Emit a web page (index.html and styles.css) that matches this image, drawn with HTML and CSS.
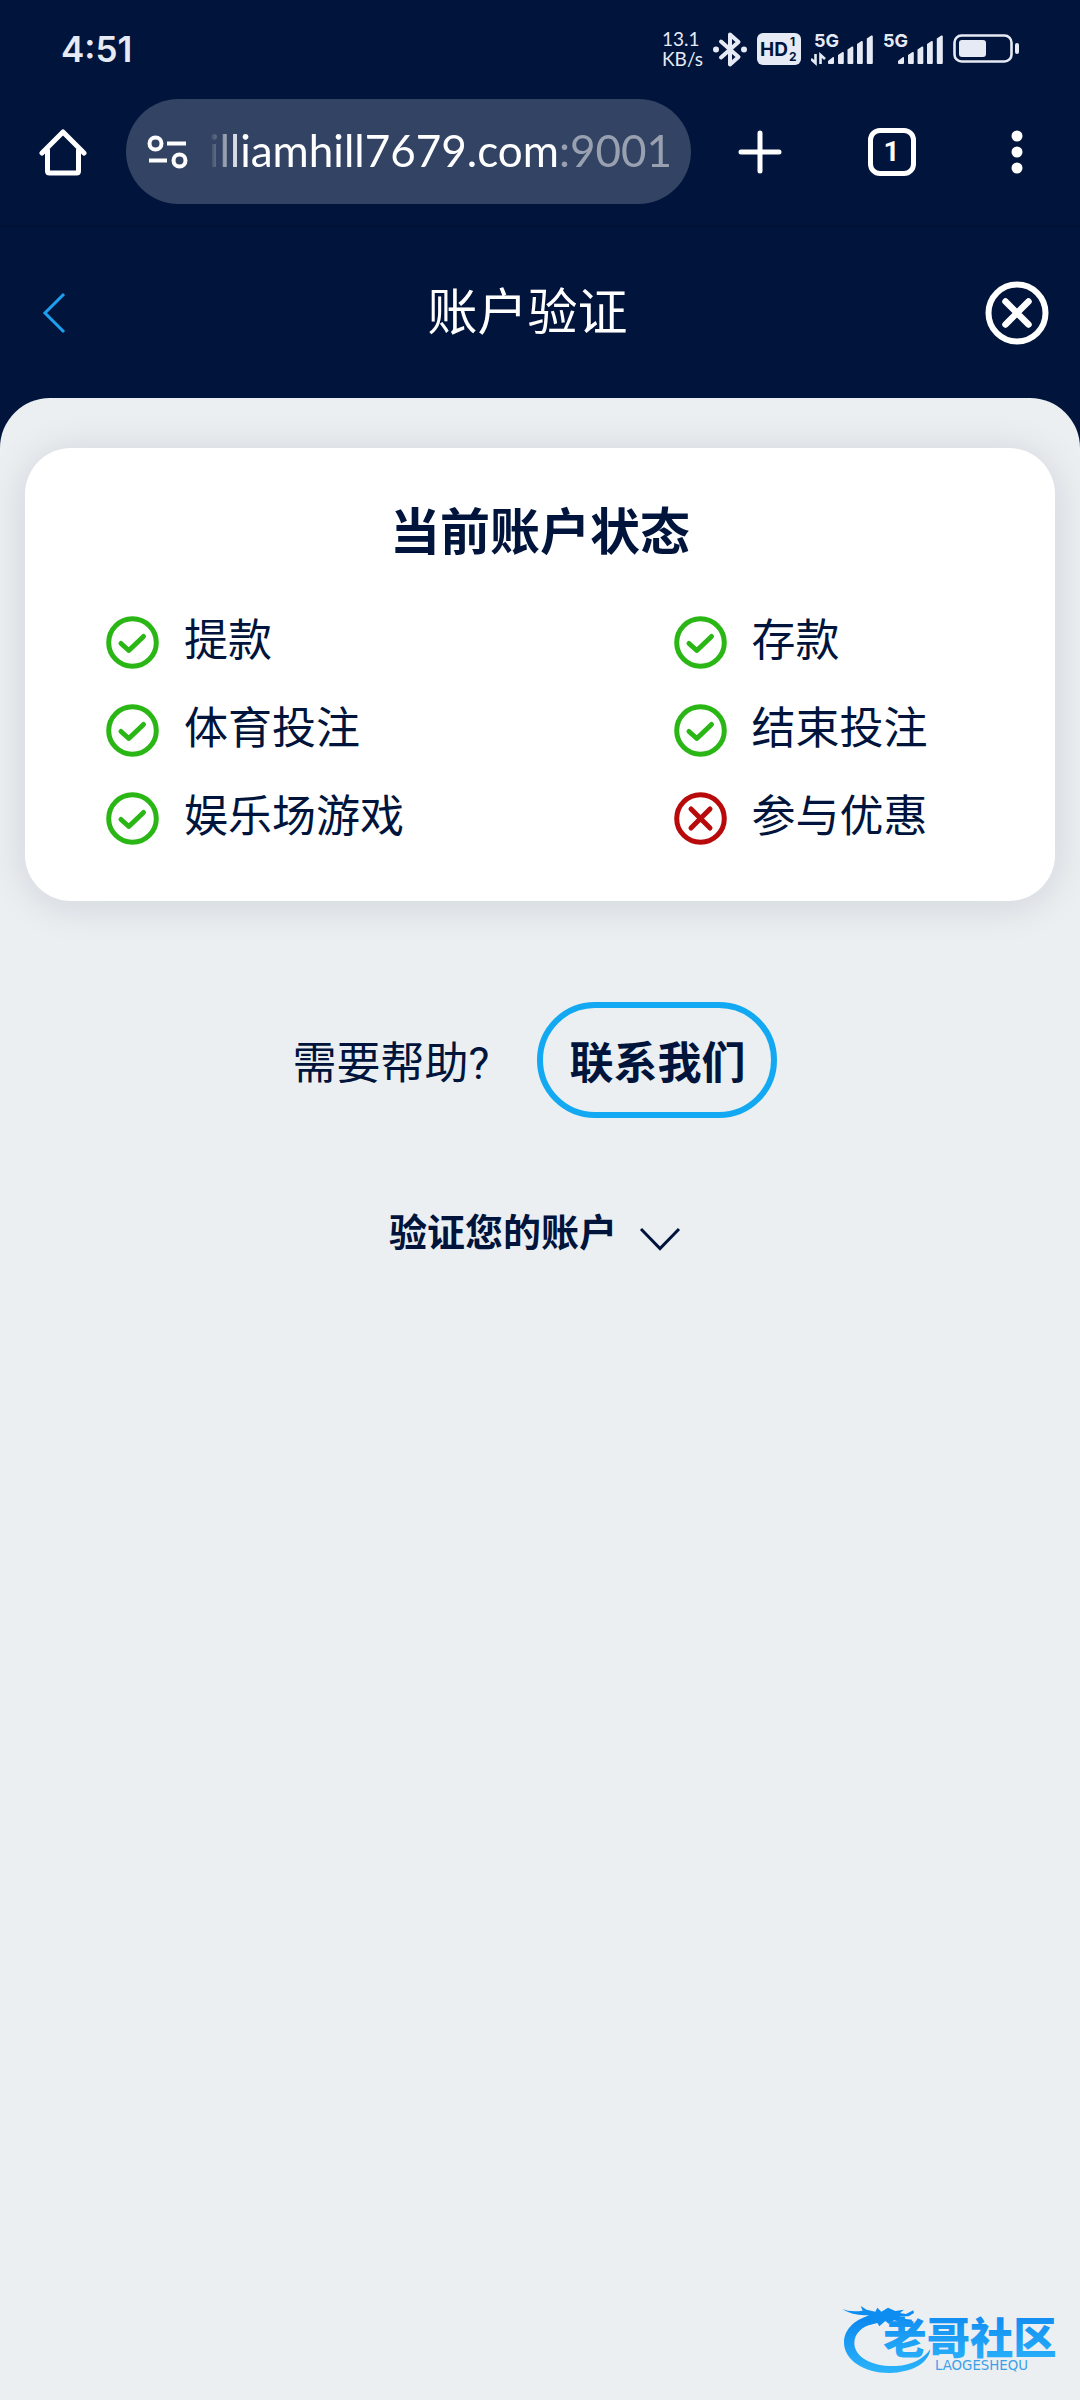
FILE: index.html
```html
<!DOCTYPE html>
<html lang="zh-CN">
<head>
    <meta charset="UTF-8">
    <meta name="viewport" content="width=device-width, initial-scale=1.0">
    <title>账户验证</title>
    <link rel="stylesheet" href="styles.css">
</head>
<body>
    <!-- shared icons -->
    <svg class="symbols" aria-hidden="true">
        <symbol id="icon-check" viewBox="0 0 53 53">
            <circle cx="26.5" cy="26.5" r="23.8" fill="none" stroke="currentColor" stroke-width="5"/>
            <path d="M15 27.5 L22.8 34.5 L37.5 20.5" fill="none" stroke="currentColor" stroke-width="5" stroke-linecap="round" stroke-linejoin="round"/>
        </symbol>
        <symbol id="icon-cross" viewBox="0 0 53 53">
            <circle cx="26.5" cy="26.5" r="23.8" fill="none" stroke="currentColor" stroke-width="5"/>
            <path d="M17 17 L36 36 M36 17 L17 36" fill="none" stroke="currentColor" stroke-width="5" stroke-linecap="round"/>
        </symbol>
        <symbol id="icon-bars" viewBox="0 0 45 30">
            <path d="M0 26 L5 22 Q6 21.500 6 23 V28 Q6 29 5 29 H1 Q0 29 0 28 Z M10 20 L14.500 17 Q15.800 16.500 15.800 18 V28 Q15.800 29 14.800 29 H11 Q10 29 10 28 Z M19.500 14.500 L24 11.500 Q25.300 11 25.300 12.500 V28 Q25.300 29 24.300 29 H20.500 Q19.500 29 19.500 28 Z M29 9 L33.500 6 Q34.800 5.500 34.800 7 V28 Q34.800 29 33.800 29 H30 Q29 29 29 28 Z M38.800 3.500 L43.300 .500 Q44.800 0 44.800 1.500 V28 Q44.800 29 43.800 29 H39.800 Q38.800 29 38.800 28 Z" fill="currentColor"/>
        </symbol>
    </svg>

    <div class="status-bar">
        <span class="clock">4:51</span>
        <div class="status-icons">
            <span class="net-speed">13.1<br>KB/s</span>
            <svg width="34" height="37" viewBox="0 0 34 37">
                <path d="M8 10.500 L25.500 26 L17 33.500 V3.500 L25.500 11 L8 26.500" fill="none" stroke="currentColor" stroke-width="4" stroke-linecap="round" stroke-linejoin="round"/>
                <circle cx="3" cy="18.500" r="3" fill="currentColor"/>
                <circle cx="31" cy="18.500" r="3" fill="currentColor"/>
            </svg>
            <svg width="44" height="32" viewBox="0 0 44 32">
                <rect width="44" height="32" rx="6" fill="currentColor"/>
                <text class="hd-text" x="3" y="23">HD</text>
                <text class="hd-num" x="33" y="13">1</text>
                <text class="hd-num" x="32" y="28">2</text>
            </svg>
            <svg width="62" height="40" viewBox="0 -6 62 40">
                <text class="gen-text" x="3" y="12">5G</text>
                <path d="M0 24 L4.500 28 V19 M9.500 29 V20 L14 24" fill="none" stroke="currentColor" stroke-width="2.600"/>
                <use href="#icon-bars" x="17" y="0" width="45" height="30"/>
            </svg>
            <svg width="60" height="40" viewBox="0 -6 60 40">
                <text class="gen-text" x="0" y="12">5G</text>
                <use href="#icon-bars" x="15" y="0" width="45" height="30"/>
            </svg>
            <svg class="battery" width="66" height="30" viewBox="0 0 66 30">
                <rect x="1.500" y="1.500" width="57" height="26" rx="7" fill="none" stroke="currentColor" stroke-width="2.600"/>
                <rect x="6" y="6" width="27" height="17" rx="3" fill="currentColor"/>
                <rect x="62" y="9" width="4" height="11" rx="2" fill="currentColor"/>
            </svg>
        </div>
    </div>

    <div class="toolbar">
        <button class="icon-btn home" aria-label="主页">
            <svg width="48" height="48" viewBox="0 0 48 48">
                <path d="M3 25 L24 4 L45 25 M8.500 22 V43 Q8.500 45 10.500 45 H37.500 Q39.500 45 39.500 43 V22" fill="none" stroke="currentColor" stroke-width="5" stroke-linecap="round" stroke-linejoin="round"/>
            </svg>
        </button>
        <button class="address">
            <svg width="42" height="34" viewBox="0 0 42 34">
                <circle cx="8.500" cy="8.500" r="6" fill="none" stroke="currentColor" stroke-width="4"/>
                <path d="M20 8.500 H39 M2 25.500 H20" stroke="currentColor" stroke-width="4"/>
                <circle cx="32.500" cy="25.500" r="6" fill="none" stroke="currentColor" stroke-width="4"/>
            </svg>
            <span class="url"><span>williamhill7679.com</span><span class="port">:9001</span></span>
        </button>
        <div class="actions">
            <button class="icon-btn" aria-label="新标签页">
                <svg width="44" height="44" viewBox="0 0 44 44">
                    <path d="M22 3 V41 M3 22 H41" stroke="currentColor" stroke-width="5" stroke-linecap="round"/>
                </svg>
            </button>
            <button class="icon-btn tab-count">1</button>
            <button class="icon-btn" aria-label="菜单">
                <svg width="32" height="44" viewBox="0 0 32 44">
                    <circle cx="16" cy="6" r="5.500" fill="currentColor"/>
                    <circle cx="16" cy="22" r="5.500" fill="currentColor"/>
                    <circle cx="16" cy="38" r="5.500" fill="currentColor"/>
                </svg>
            </button>
        </div>
    </div>

    <header class="page-header">
        <a class="back" href="#" aria-label="返回">
            <svg width="24" height="42" viewBox="0 0 24 42">
                <path d="M22 2 L3 21 L22 40" fill="none" stroke="currentColor" stroke-width="3"/>
            </svg>
        </a>
        <h1>账户验证</h1>
        <button class="icon-btn close" aria-label="关闭">
            <svg width="64" height="64" viewBox="0 0 64 64">
                <circle cx="32" cy="32" r="28.500" fill="none" stroke="currentColor" stroke-width="6"/>
                <path d="M20.500 20.500 L43.500 43.500 M43.500 20.500 L20.500 43.500" stroke="currentColor" stroke-width="6.500" stroke-linecap="round"/>
            </svg>
        </button>
    </header>

    <main>
        <section class="card">
            <h2>当前账户状态</h2>
            <ul class="status-list">
                <li><svg class="ok"><use href="#icon-check"/></svg><span>提款</span></li>
                <li><svg class="ok"><use href="#icon-check"/></svg><span>存款</span></li>
                <li><svg class="ok"><use href="#icon-check"/></svg><span>体育投注</span></li>
                <li><svg class="ok"><use href="#icon-check"/></svg><span>结束投注</span></li>
                <li><svg class="ok"><use href="#icon-check"/></svg><span>娱乐场游戏</span></li>
                <li><svg class="no"><use href="#icon-cross"/></svg><span>参与优惠</span></li>
            </ul>
        </section>

        <div class="help">
            <span>需要帮助?</span>
            <button class="contact">联系我们</button>
        </div>

        <button class="verify">
            <span>验证您的账户</span>
            <svg width="42" height="24" viewBox="0 0 42 24">
                <path d="M2 2 L21 21.500 L40 2" fill="none" stroke="currentColor" stroke-width="3"/>
            </svg>
        </button>
    </main>

    <svg class="community-logo" width="228" height="74" viewBox="60 68 684 222">
        <defs>
            <linearGradient id="blue" x1="0" y1="0" x2="0" y2="1">
                <stop offset="0" stop-color="#0b84ee"/>
                <stop offset="1" stop-color="#2bb4fb"/>
            </linearGradient>
        </defs>
        <!-- dragon body -->
        <path d="M160 103 C108 112 73 145 72 185 C71 240 135 279 210 278 C270 276 326 252 331 206 C312 235 278 254 228 257 C160 260 103 232 103 188 C103 160 124 140 158 130 Z" fill="url(#blue)"/>
        <!-- dragon head, horns and whiskers -->
        <path d="M66 86 Q92 97 128 91 L122 77 L140 88 L166 94 L172 82 L184 94 L204 82 L226 92 L252 88 L240 98 L258 101 L280 90 L282 98 L266 108 L238 108 L256 116 L276 118 L274 129 L244 126 L222 120 L206 130 L196 122 L178 138 L172 128 L148 134 L152 116 L130 116 L146 104 Q104 108 66 86 Z" fill="#0d8df0"/>
        <text class="logo-name" x="190" y="222" fill="url(#blue)">老哥社区</text>
        <text class="logo-sub" x="345" y="268">LAOGESHEQU</text>
    </svg>
</body>
</html>
```
FILE: styles.css
```css
* {
    box-sizing: border-box;
}
body {
    margin: 0;
    min-height: 100vh;
    position: relative;
    background: #ebeff2;
    color: #00143c;
    font-family: Roboto, "Noto Sans CJK SC", sans-serif;
}
button {
    padding: 0;
    border: none;
    background: none;
    color: inherit;
    font-family: inherit;
}
svg {
    display: block;
    flex: none;
}
.symbols {
    position: absolute;
    width: 0;
    height: 0;
}

/* phone status bar */
.status-bar {
    display: flex;
    align-items: center;
    justify-content: space-between;
    height: 78px;
    padding: 20px 61px 0;
    background: #00143c;
    color: #e6eaf4;
}
.clock {
    font-family: Inter, sans-serif;
    font-size: 35px;
    font-weight: 600;
}
.status-icons {
    display: flex;
    align-items: center;
    gap: 10px;
}
.net-speed {
    font-family: Lato, sans-serif;
    font-size: 19px;
    line-height: 20px;
}
.hd-text,
.hd-num,
.gen-text {
    font-family: Inter, sans-serif;
    font-weight: 700;
}
.hd-text {
    font-size: 19px;
    fill: #00143c;
}
.hd-num {
    font-size: 12px;
    fill: #00143c;
}
.gen-text {
    font-size: 18px;
    fill: currentColor;
}

/* browser toolbar */
.toolbar {
    display: flex;
    align-items: center;
    height: 149px;
    padding: 0 47px 0 39px;
    border-bottom: 2px solid #001135;
    background: #00143c;
    color: #fff;
}
.icon-btn {
    display: flex;
    flex: none;
    align-items: center;
    justify-content: center;
}
.address {
    display: flex;
    flex: 1;
    align-items: center;
    gap: 20px;
    min-width: 0;
    height: 105px;
    margin: 0 47px 0 39px;
    padding: 0 19px 0 21px;
    border-radius: 53px;
    background: #334363;
}
.url {
    display: flex;
    flex: 1;
    justify-content: flex-end;
    min-width: 0;
    padding-bottom: 4px;
    overflow: hidden;
    font-family: Lato, sans-serif;
    font-size: 44px;
    line-height: 60px;
    -webkit-mask-image: linear-gradient(to right, transparent, #000 32px);
    mask-image: linear-gradient(to right, transparent, #000 32px);
}
.port {
    color: #99a1b1;
}
.actions {
    display: flex;
    align-items: center;
    justify-content: space-between;
    flex: none;
    width: 295px;
}
.tab-count {
    width: 48px;
    height: 48px;
    border: 5px solid #fff;
    border-radius: 12px;
    font-size: 28px;
    font-weight: 700;
}

/* page header */
.page-header {
    display: flex;
    align-items: center;
    justify-content: space-between;
    height: 171px;
    padding: 0 31px 0 42px;
    background: #00143c;
    color: #fff;
}
.page-header h1 {
    margin: 0;
    font-size: 50px;
    font-weight: 400;
    line-height: 60px;
}
.back {
    width: 28px;
    color: #1ea0f0;
}

/* content */
main {
    display: flex;
    flex-direction: column;
    align-items: center;
    padding: 50px 25px;
    border-radius: 50px 50px 0 0;
    background: #ebeff2;
    box-shadow: 0 -50px 0 50px #00143c;
    clip-path: inset(0);
}
.card {
    width: 100%;
    padding: 55px 81px 39px;
    border-radius: 46px;
    background: #fff;
    box-shadow: 0 4px 40px rgba(0, 20, 30, 0.12);
}
.card h2 {
    margin: 0 0 35px;
    font-size: 50px;
    font-weight: 700;
    line-height: 60px;
    text-align: center;
}
.status-list {
    display: grid;
    grid-template-columns: 17fr 9fr;
    margin: 0;
    padding: 0;
    list-style: none;
}
.status-list li {
    display: flex;
    align-items: center;
    gap: 25px;
    height: 88px;
    font-size: 44px;
    line-height: 60px;
    white-space: nowrap;
}
.status-list span {
    padding-bottom: 2px;
}
.status-list svg {
    width: 53px;
    height: 53px;
}
.ok {
    color: #2ab615;
}
.no {
    color: #b80a0a;
}
.help {
    display: flex;
    align-items: center;
    gap: 48px;
    margin-top: 101px;
    padding-right: 10px;
    font-size: 44px;
}
.contact {
    height: 116px;
    padding: 0 26px;
    border: 6px solid #12a9f2;
    border-radius: 58px;
    font-size: 44px;
    font-weight: 700;
}
.verify {
    display: flex;
    align-items: flex-end;
    gap: 22px;
    margin-top: 97px;
    padding-right: 10px;
    font-size: 38px;
    font-weight: 700;
    line-height: 36px;
}

/* community watermark */
.community-logo {
    position: absolute;
    right: 12px;
    bottom: 23px;
}
.logo-name {
    font-family: "Noto Sans CJK SC", sans-serif;
    font-size: 130px;
    font-weight: 900;
}
.logo-sub {
    font-family: "DejaVu Sans", sans-serif;
    font-size: 40px;
    fill: #3c9fe8;
}
```
